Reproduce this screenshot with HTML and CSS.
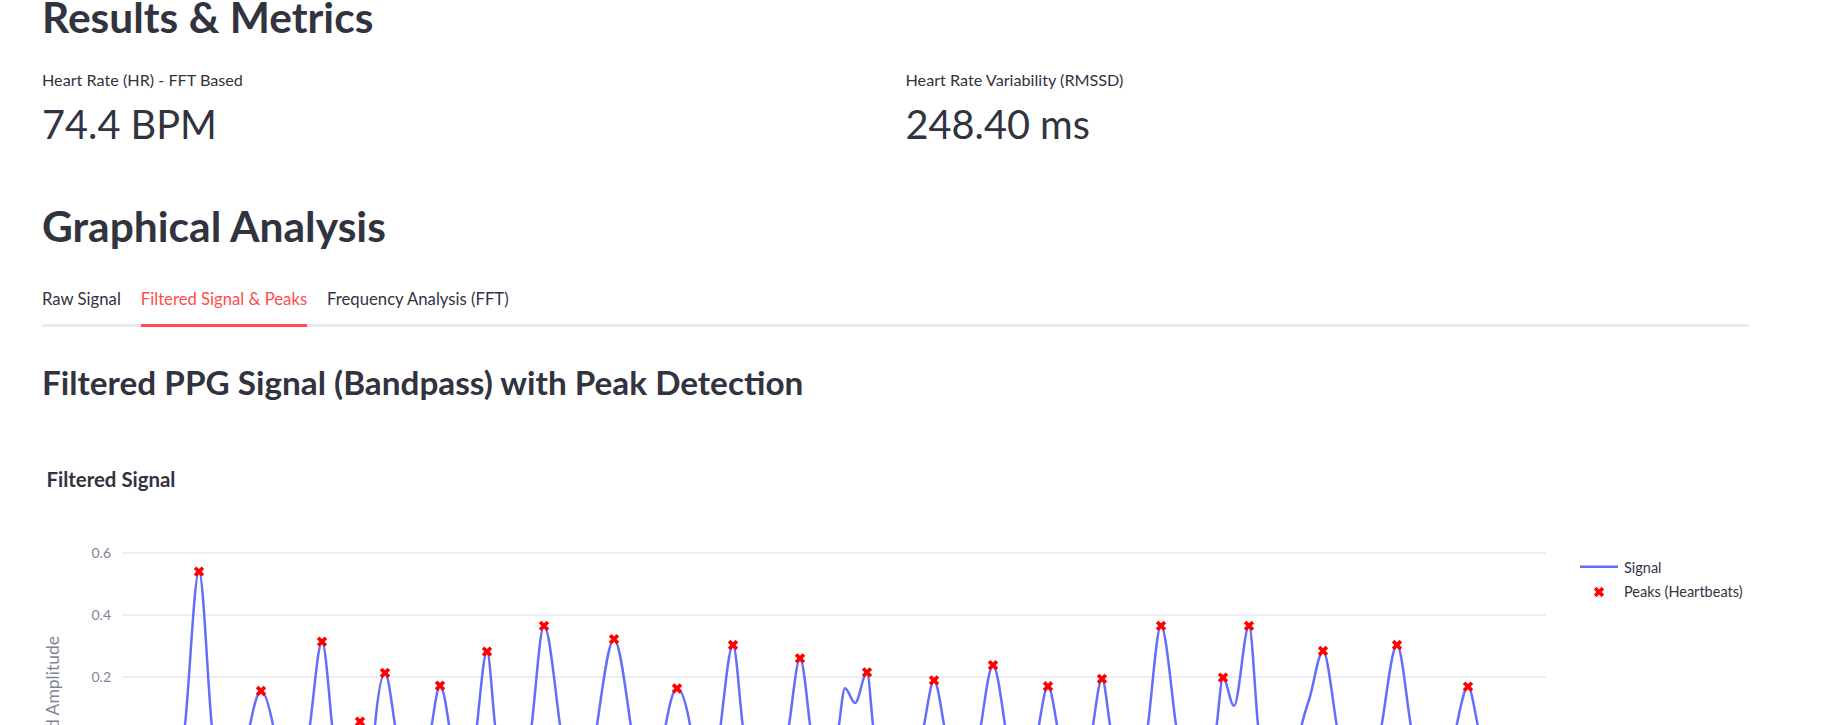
FILE: index.html
```html
<!DOCTYPE html>
<html lang="en">
<head>
<meta charset="utf-8">
<title>Results &amp; Metrics</title>
<link rel="stylesheet" href="styles.css">
</head>
<body>
<main class="page">
  <h2 class="h2 first">Results &amp; Metrics</h2>
  <div class="metrics">
    <div class="metric">
      <div class="metric-label">Heart Rate (HR) - FFT Based</div>
      <div class="metric-value">74.4 BPM</div>
    </div>
    <div class="metric">
      <div class="metric-label">Heart Rate Variability (RMSSD)</div>
      <div class="metric-value">248.40 ms</div>
    </div>
  </div>
  <h2 class="h2 section">Graphical Analysis</h2>
  <div class="tabs">
    <div class="tab">Raw Signal</div>
    <div class="tab active">Filtered Signal &amp; Peaks</div>
    <div class="tab">Frequency Analysis (FFT)</div>
  </div>
  <h3 class="h3">Filtered PPG Signal (Bandpass) with Peak Detection</h3>
  <svg class="chart" id="chart" width="1707" height="330" viewBox="0 0 1707 330">
    <defs>
      <path id="xm" d="M0,2.6l2.6,2.6l2.6,-2.6l-2.6,-2.6l2.6,-2.6l-2.6,-2.6l-2.6,2.6l-2.6,-2.6l-2.6,2.6l2.6,2.6l-2.6,2.6l2.6,2.6Z"/>
      <clipPath id="plotclip"><rect x="80" y="0" width="1424" height="330"/></clipPath>
    </defs>
    <text class="plot-title" x="4.5" y="67">Filtered Signal</text>
    <g class="grid">
      <line x1="80" x2="1504" y1="133" y2="133"/>
      <line x1="80" x2="1504" y1="195" y2="195"/>
      <line x1="80" x2="1504" y1="257" y2="257"/>
      <line x1="80" x2="1504" y1="319" y2="319"/>
    </g>
    <g class="ticks">
      <text x="69" y="138">0.6</text>
      <text x="69" y="200">0.4</text>
      <text x="69" y="262">0.2</text>
      <text x="69" y="324">0</text>
    </g>
    <text class="axis-title" transform="translate(16.8,216) rotate(-90)">Normalized Amplitude</text>
    <g clip-path="url(#plotclip)">
      <path id="signal" class="signal" d=""/>
      <g id="peaks" class="peaks"></g>
    </g>
    <g class="legend">
      <line class="signal" x1="1538" x2="1576" y1="146.7" y2="146.7"/>
      <text class="legend-text" x="1582" y="153">Signal</text>
      <use href="#xm" class="peak" transform="translate(1557,172)"/>
      <text class="legend-text" x="1582" y="176.7">Peaks (Heartbeats)</text>
    </g>
  </svg>
</main>
<script src="script.js"></script>
</body>
</html>
```
FILE: styles.css
```css
html, body {
  margin: 0;
  height: 725px;
  overflow: hidden;
  background: #ffffff;
}
body {
  font-family: "Lato", "Source Sans Pro", sans-serif;
  color: #31333F;
}
.page {
  width: 1707px;
  padding-left: 42px;
  padding-top: 1px;
  display: flex;
  flex-direction: column;
}
.h2 {
  margin: 0;
  font-size: 42.5px;
  line-height: 51px;
  font-weight: 700;
}
.h2.first { margin-top: -10px; }
.h2.section { margin-top: 52px; }
.metrics {
  display: grid;
  grid-template-columns: 1fr 1fr;
  column-gap: 20px;
  margin-top: 28px;
}
.metric-label {
  font-size: 16.2px;
  line-height: 20px;
}
.metric-value {
  font-size: 39.7px;
  line-height: 48px;
  margin-top: 10px;
}
.tabs {
  display: flex;
  gap: 20px;
  margin-top: 38px;
  border-bottom: 3px solid #EBEBEC;
}
.tab {
  font-size: 16.7px;
  line-height: 20px;
  padding-bottom: 15px;
  border-bottom: 3px solid transparent;
  margin-bottom: -3px;
}
.tab.active {
  color: #FF4B4B;
  border-bottom-color: #FF4B4B;
}
.h3 {
  margin: 35px 0 0;
  font-size: 33.3px;
  line-height: 40px;
  font-weight: 700;
}
.chart {
  display: block;
  margin-top: 18px;
}
.plot-title {
  font-family: "Lato", sans-serif;
  font-weight: 700;
  font-size: 20.4px;
  fill: #31333F;
}
.grid line {
  stroke: #E6E9EF;
  stroke-width: 1.4;
}
.ticks text {
  font-family: "Lato", sans-serif;
  font-size: 14px;
  fill: #808495;
  text-anchor: end;
}
.axis-title {
  font-family: "Lato", sans-serif;
  font-size: 17.5px;
  fill: #808495;
  text-anchor: end;
}
.signal {
  fill: none;
  stroke: #636EFA;
  stroke-width: 2.5;
  stroke-linejoin: round;
}
.peak, .peaks use {
  fill: #FF0000;
}
.legend-text {
  font-family: "Lato", sans-serif;
  font-size: 14.5px;
  fill: #31333F;
}
```
FILE: script.js
```js
(function () {
  var NS = "http://www.w3.org/2000/svg";
  var OX = 42, Y0 = 319, K = 310;
  var LEG = 0.045, TR = -0.45;
  function sx(x) { return x - OX; }
  function sy(v) { return Y0 - v * K; }

  // [left leg x, [[x, value, isPeak], ...], right leg x]  (x in page px)
  var groups = [
    [185, [[199, 0.54, 1]], 211.7],
    [250, [[261, 0.155, 1]], 273],
    [310, [[322, 0.314, 1]], 332],
    [357, [[360, 0.056, 1]], 363],
    [375, [[385, 0.213, 1]], 395],
    [431.7, [[440, 0.172, 1]], 449],
    [477, [[487, 0.282, 1]], 495],
    [531.7, [[544, 0.365, 1]], 560],
    [597, [[614, 0.322, 1]], 630.7],
    [665.7, [[677, 0.163, 1]], 690],
    [720.7, [[733, 0.303, 1]], 742.7],
    [789, [[800, 0.26, 1]], 810],
    [839, [[845, 0.164, 0], [855, 0.116, 0], [867, 0.215, 1]], 873],
    [924, [[934, 0.189, 1]], 944],
    [981, [[993, 0.238, 1]], 1005],
    [1039, [[1048, 0.17, 1]], 1057],
    [1093, [[1102, 0.194, 1]], 1110],
    [1148, [[1161, 0.365, 1]], 1176],
    [1216.7, [[1223, 0.198, 1], [1234, 0.107, 0], [1249, 0.365, 1]], 1258],
    [1301.7, [[1310, 0.137, 0], [1323, 0.284, 1]], 1336.7],
    [1381.7, [[1397, 0.303, 1]], 1410.7],
    [1456.7, [[1468, 0.169, 1]], 1477.7]
  ];

  var pts = [[122, -0.3], [160, TR]];
  var peaks = [];
  var prevRight = null;
  groups.forEach(function (g) {
    if (prevRight !== null) pts.push([(prevRight + g[0]) / 2, TR]);
    pts.push([g[0], LEG]);
    g[1].forEach(function (p) {
      pts.push([p[0], p[1]]);
      if (p[2]) peaks.push(p);
    });
    pts.push([g[2], LEG]);
    prevRight = g[2];
  });
  pts.push([prevRight + 24, TR]);
  pts.push([1546, -0.2]);

  var P = pts.map(function (p) { return [sx(p[0]), sy(p[1])]; });

  function sign(x) { return x < 0 ? -1 : 1; }
  function slope3(a, b, c) {
    var h0 = b[0] - a[0], h1 = c[0] - b[0];
    var s0 = (b[1] - a[1]) / h0, s1 = (c[1] - b[1]) / h1;
    var p = (s0 * h1 + s1 * h0) / (h0 + h1);
    return (sign(s0) + sign(s1)) * Math.min(Math.abs(s0), Math.abs(s1), 0.5 * Math.abs(p)) || 0;
  }
  var n = P.length, t = new Array(n);
  for (var i = 1; i < n - 1; i++) t[i] = slope3(P[i - 1], P[i], P[i + 1]);
  var h = P[1][0] - P[0][0];
  t[0] = (3 * (P[1][1] - P[0][1]) / h - t[1]) / 2;
  h = P[n - 1][0] - P[n - 2][0];
  t[n - 1] = (3 * (P[n - 1][1] - P[n - 2][1]) / h - t[n - 2]) / 2;

  function f(v) { return Math.round(v * 100) / 100; }
  var d = "M" + f(P[0][0]) + "," + f(P[0][1]);
  for (i = 0; i < n - 1; i++) {
    var dx = (P[i + 1][0] - P[i][0]) / 3;
    d += "C" + f(P[i][0] + dx) + "," + f(P[i][1] + dx * t[i]) + " " +
         f(P[i + 1][0] - dx) + "," + f(P[i + 1][1] - dx * t[i + 1]) + " " +
         f(P[i + 1][0]) + "," + f(P[i + 1][1]);
  }
  document.getElementById("signal").setAttribute("d", d);

  var pg = document.getElementById("peaks");
  peaks.forEach(function (p) {
    var u = document.createElementNS(NS, "use");
    u.setAttribute("href", "#xm");
    u.setAttribute("transform", "translate(" + f(sx(p[0])) + "," + f(sy(p[1])) + ")");
    pg.appendChild(u);
  });
})();
```
